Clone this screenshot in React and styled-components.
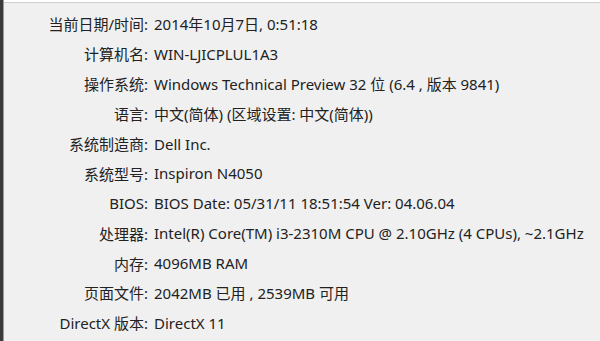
import React from "react";
import styled, { createGlobalStyle } from "styled-components";

const rows = [
  ["当前日期/时间:", "2014年10月7日, 0:51:18"],
  ["计算机名:", "WIN-LJICPLUL1A3"],
  ["操作系统:", "Windows Technical Preview 32 位 (6.4 , 版本 9841)"],
  ["语言:", "中文(简体) (区域设置: 中文(简体))"],
  ["系统制造商:", "Dell Inc."],
  ["系统型号:", "Inspiron N4050"],
  ["BIOS:", "BIOS Date: 05/31/11 18:51:54 Ver: 04.06.04"],
  ["处理器:", "Intel(R) Core(TM) i3-2310M CPU @ 2.10GHz (4 CPUs), ~2.1GHz"],
  ["内存:", "4096MB RAM"],
  ["页面文件:", "2042MB 已用 , 2539MB 可用"],
  ["DirectX 版本:", "DirectX 11"],
];

const GlobalStyle = createGlobalStyle`
  html, body {
    margin: 0;
    padding: 0;
    background: #f0f0f0;
  }
`;

const Window = styled.div`
  width: 600px;
  height: 341px;
  box-sizing: border-box;
  display: flex;
  background: #ffffff;
  overflow: hidden;
`;

const Edge = styled.div`
  width: 3px;
  background: #3a3a3a;
  border-right: 1px solid #9a9a9a;
`;

const Panel = styled.div`
  flex: 1;
  margin-top: 2px;
  border-top: 1px solid #cfcfcf;
  background: #f0f0f0;
  padding-top: 6px;
`;

const InfoGrid = styled.div`
  display: grid;
  grid-template-columns: 144px 1fr;
  column-gap: 6px;
  grid-auto-rows: 29.9px;
  align-items: center;
  font-family: "Noto Sans", "Noto Sans CJK SC", sans-serif;
  font-size: 15px;
  color: #222222;
`;

const Label = styled.div`
  text-align: right;
  white-space: nowrap;
`;

const Value = styled.div`
  white-space: nowrap;
`;

export default function App() {
  return (
    <>
      <GlobalStyle />
      <Window>
        <Edge />
        <Panel>
          <InfoGrid>
            {rows.map(([label, value]) => (
              <React.Fragment key={label}>
                <Label>{label}</Label>
                <Value>{value}</Value>
              </React.Fragment>
            ))}
          </InfoGrid>
        </Panel>
      </Window>
    </>
  );
}
